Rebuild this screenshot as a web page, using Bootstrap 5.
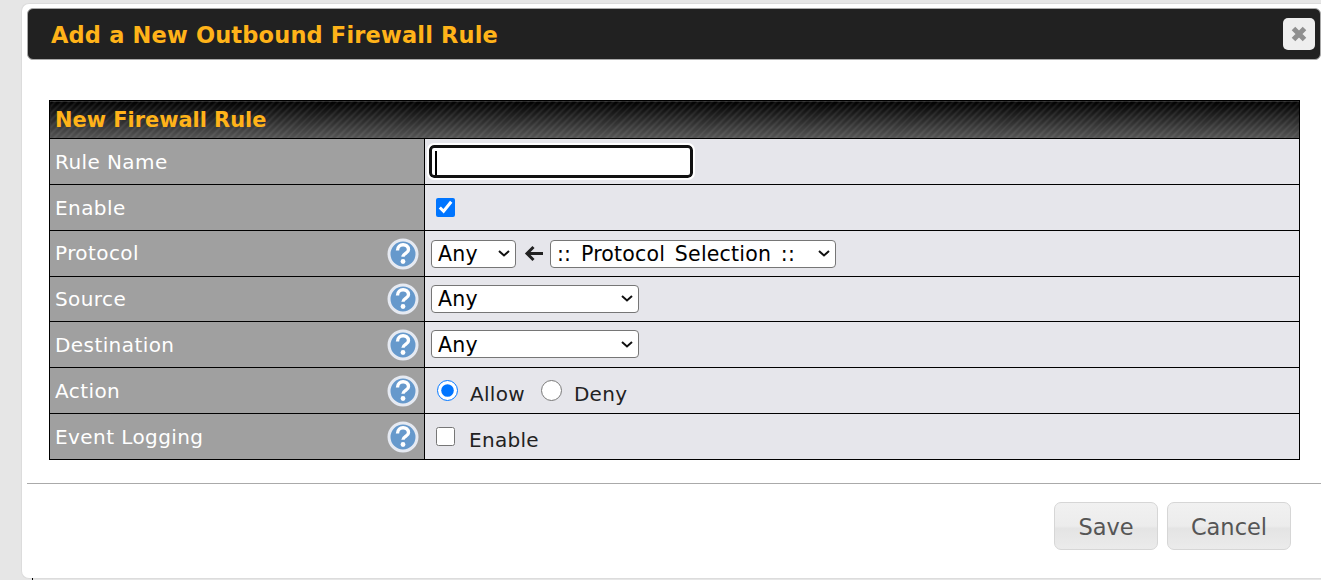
<!DOCTYPE html>
<html lang="en">
<head>
<meta charset="utf-8">
<title>Add a New Outbound Firewall Rule</title>
<link rel="stylesheet" href="https://cdn.jsdelivr.net/npm/bootstrap@5.3.0/dist/css/bootstrap.min.css">
<style>
html,body{height:100%;overflow:hidden}
body{background:#e6e6e6;font-family:"DejaVu Sans",sans-serif;font-size:20px;color:#333;padding:3px 0 0 21px}
.dlg{background:#fff;height:576px;border-radius:8px 0 0 8px;border:1px solid #dcdcdc;border-right:0;padding:4px 0 0 5px}
.dlg-head{height:52px;background:#212121;border:1px solid #aaa;border-radius:6px;padding-left:23px;padding-right:5px}
.dlg-title{font-size:22.5px;font-weight:700;color:#ffb319;letter-spacing:.17px;margin:3px 0 0}
.x-btn{width:32px;height:32px;background:#eee;border:0;border-radius:5px;padding:0}
.rule-wrap{padding:40px 21px 0 22px}
.rule-tbl{width:1251px;border-collapse:collapse;table-layout:fixed}
.rule-tbl th,.rule-tbl td{border:1px solid #000;padding:0}
.rule-tbl thead th{height:38px;color:#ffb319;font-size:20.9px;font-weight:700;padding:2px 0 0 5px;
 background:repeating-linear-gradient(-45deg,rgba(255,255,255,.07) 0 2px,rgba(255,255,255,0) 2px 5px),linear-gradient(#000,#555)}
.rule-tbl tbody tr{height:46px}
.rule-tbl tbody tr.row-s{height:45px}
.col-lbl{width:375px}
.lbl{background:#a0a0a0;color:#fff;padding:0 5px 0 5px!important;letter-spacing:.42px}
.txt-up{margin-top:-2px}
.val{background:#e6e6eb;padding-left:6px!important;color:#222;letter-spacing:.3px}
.name-in{display:block;width:264px;height:33px;margin-left:-2px;background:linear-gradient(#000,#000) 3px 3px/2px 24px no-repeat #fff;border:3px solid #111;border-radius:5px;outline:2px solid #fff;outline-offset:0}
select{appearance:none;-webkit-appearance:none;font:20.5px "DejaVu Sans",sans-serif;letter-spacing:.2px;word-spacing:3px;height:28px;color:#000;border:1px solid #767676;border-radius:4px;padding:1px 18px 0 6px;
 background:#fff url("data:image/svg+xml,%3Csvg xmlns='http://www.w3.org/2000/svg' width='12' height='7' viewBox='0 0 12 7'%3E%3Cpath d='M1 1l5 4.500L11 1' stroke='%23111' stroke-width='2' fill='none'/%3E%3C/svg%3E") no-repeat right 5px center}
.s-any{width:85px}.s-proto{width:286px}.s-wide{width:208px}
.arrow-ic{margin:0 7px 0 8px}
.cb{width:19px;height:19px;margin:0 0 0 5px}
.rd{width:21px;height:21px;margin:0}
.rd-a{margin-left:6px}
.rd-b{margin-left:16px}
.lb-r{margin:6px 0 0 12px}
.lb-c{margin:6px 0 0 14px}
.btn-dlg{height:48px;background:linear-gradient(#f1f1f1,#ececec 50%,#e4e4e4 55%,#ebebeb);border:1px solid #d6d6d6;border-radius:7px;color:#555;font-size:22.5px;padding:3px 0 0}
.btn-save{width:104px}.btn-cancel{width:124px}
.dlg-foot{border-top:1px solid #aaa;margin-top:23px;padding:18px 30px 0 0;gap:9px}
.tick{position:absolute;left:32px;top:578px;width:1px;height:2px;background:#000}
</style>
</head>
<body class="position-relative">
<div class="dlg d-flex flex-column">
  <div class="dlg-head d-flex align-items-center justify-content-between">
    <h1 class="dlg-title">Add a New Outbound Firewall Rule</h1>
    <button class="x-btn d-flex align-items-center justify-content-center" type="button" aria-label="Close">
      <svg width="18" height="18" viewBox="0 0 18 18" aria-hidden="true"><path d="M3.5 3.5 14.5 14.5M14.500 3.500 3.500 14.500" stroke="#8f8f8f" stroke-width="5" fill="none"/></svg>
    </button>
  </div>
  <div class="rule-wrap">
    <table class="rule-tbl">
      <colgroup><col class="col-lbl"><col></colgroup>
      <thead><tr><th colspan="2">New Firewall Rule</th></tr></thead>
      <tbody>
        <tr><td class="lbl">Rule Name</td><td class="val"><input class="name-in" type="text" aria-label="Rule Name"></td></tr>
        <tr><td class="lbl">Enable</td><td class="val"><div class="d-flex align-items-center"><input class="cb" type="checkbox" checked aria-label="Enable"></div></td></tr>
        <tr><td class="lbl"><div class="d-flex align-items-center justify-content-between"><span class="txt-up">Protocol</span>
          <svg width="32" height="32" viewBox="0 0 32 32" aria-hidden="true"><use href="#q"/></svg></div></td>
          <td class="val"><div class="d-flex align-items-center">
            <select class="s-any"><option>Any</option></select>
            <svg class="arrow-ic" width="19" height="17" viewBox="0 0 19 17" aria-hidden="true"><path d="M19 8.500H3M9.500 2 3 8.500l6.500 6.500" stroke="#222" stroke-width="3" fill="none"/></svg>
            <select class="s-proto"><option>:: Protocol Selection ::</option></select>
          </div></td></tr>
        <tr class="row-s"><td class="lbl"><div class="d-flex align-items-center justify-content-between">Source
          <svg width="32" height="32" viewBox="0 0 32 32" aria-hidden="true"><use href="#q"/></svg></div></td>
          <td class="val"><select class="s-wide"><option>Any</option></select></td></tr>
        <tr><td class="lbl"><div class="d-flex align-items-center justify-content-between">Destination
          <svg width="32" height="32" viewBox="0 0 32 32" aria-hidden="true"><use href="#q"/></svg></div></td>
          <td class="val"><select class="s-wide"><option>Any</option></select></td></tr>
        <tr><td class="lbl"><div class="d-flex align-items-center justify-content-between">Action
          <svg width="32" height="32" viewBox="0 0 32 32" aria-hidden="true"><use href="#q"/></svg></div></td>
          <td class="val"><div class="d-flex align-items-center">
            <input class="rd rd-a" type="radio" name="act" id="a1" checked><label for="a1" class="lb-r">Allow</label>
            <input class="rd rd-b" type="radio" name="act" id="a2"><label for="a2" class="lb-r">Deny</label>
          </div></td></tr>
        <tr><td class="lbl"><div class="d-flex align-items-center justify-content-between">Event Logging
          <svg width="32" height="32" viewBox="0 0 32 32" aria-hidden="true"><use href="#q"/></svg></div></td>
          <td class="val"><div class="d-flex align-items-center">
            <input class="cb" type="checkbox" id="e1"><label for="e1" class="lb-c">Enable</label>
          </div></td></tr>
      </tbody>
    </table>
  </div>
  <div class="dlg-foot d-flex justify-content-end">
    <button class="btn-dlg btn-save" type="button">Save</button>
    <button class="btn-dlg btn-cancel" type="button">Cancel</button>
  </div>
</div>
<div class="tick"></div>
<svg width="0" height="0" class="position-absolute" aria-hidden="true"><defs>
  <g id="q"><circle cx="16" cy="16" r="14" fill="#6699cc" stroke="#e6eaf2" stroke-width="3"/>
  <path d="M10.500 12.500c0-7.500 11-7.500 11-.8 0 3.500-5.500 3.800-5.500 7" stroke="#fff" stroke-width="3.400" fill="none"/><circle cx="16" cy="23.500" r="2.400" fill="#fff"/></g>
</defs></svg>
</body>
</html>
